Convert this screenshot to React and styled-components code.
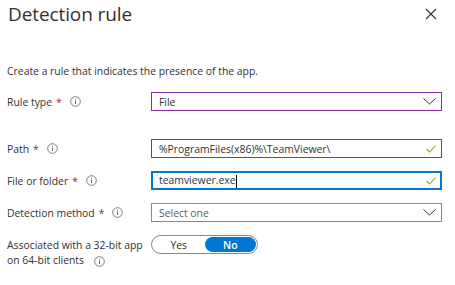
import React from "react";
import styled, { createGlobalStyle } from "styled-components";

const Global = createGlobalStyle`
  html, body { margin: 0; padding: 0; background: #fff; }
  body { font-family: "Open Sans", "Noto Sans", sans-serif; color: #323130; }
`;

const Page = styled.div`
  width: 455px;
  height: 285px;
  overflow: hidden;
  display: flex;
  flex-direction: column;
`;

const Header = styled.div`
  display: flex;
  align-items: center;
  justify-content: space-between;
  height: 28px;
  padding: 0 18px 0 8px;
`;

const Title = styled.h1`
  margin: 0;
  font-size: 19px;
  font-weight: 400;
  letter-spacing: -0.1px;
  color: #323130;
`;

const CloseButton = styled.button`
  border: 0;
  background: none;
  padding: 0;
  width: 12px;
  height: 12px;
  display: flex;
  cursor: pointer;
`;

const Description = styled.p`
  margin: 36px 0 0 7px;
  font-size: 10.4px;
  line-height: 14px;
`;

const Form = styled.div`
  display: grid;
  grid-template-columns: 144px 291px;
  column-gap: 0;
  row-gap: 13px;
  margin: 14px 0 0 7px;
  align-items: center;
`;

const Label = styled.div`
  font-size: 10.4px;
  line-height: ${(p) => (p.$top ? "15px" : "14px")};
  display: flex;
  align-items: center;
  margin-top: ${(p) => (p.$spaced ? "15px" : p.$top ? "3px" : "0")};
  align-self: ${(p) => (p.$top ? "start" : "center")};
`;

const Star = styled.span`
  color: #a4262c;
  margin-left: 4px;
`;

const InfoWrap = styled.span`
  display: inline-flex;
  vertical-align: middle;
  margin-left: ${(p) => (p.$wide ? "10px" : "8px")};
`;

const Field = styled.div`
  box-sizing: border-box;
  height: 19px;
  margin-top: ${(p) => (p.$spaced ? "15px" : "0")};
  border: ${(p) => (p.$focus ? "2px solid #0078d4" : p.$dirty ? "1px solid #8a2da5" : "1px solid #8a8886")};
  display: flex;
  align-items: center;
  padding: 0 ${(p) => (p.$focus ? "4px" : "5px")} 0 ${(p) => (p.$focus ? "6px" : "7px")};
  font-size: 10.4px;
  color: ${(p) => (p.$placeholder ? "#605e5c" : "#323130")};
`;

const FieldText = styled.span`
  flex: 1;
  white-space: nowrap;
`;

const Caret = styled.span`
  display: inline-block;
  width: 1px;
  height: 13px;
  background: #000;
  vertical-align: middle;
`;

const Toggle = styled.div`
  box-sizing: border-box;
  width: 107px;
  height: 19px;
  border: 1px solid #8a8886;
  border-radius: 10px;
  display: flex;
  align-items: center;
  padding: 1px;
  align-self: start;
`;

const ToggleOption = styled.div`
  flex: 1;
  height: 15px;
  border-radius: 8px;
  display: flex;
  align-items: center;
  justify-content: center;
  font-size: 10.4px;
  font-weight: ${(p) => (p.$active ? 600 : 400)};
  background: ${(p) => (p.$active ? "#0078d4" : "transparent")};
  color: ${(p) => (p.$active ? "#fff" : "#323130")};
`;

const InfoIcon = () => (
  <svg width="11" height="11" viewBox="0 0 11 11">
    <circle cx="5.5" cy="5.5" r="4.8" fill="none" stroke="#605e5c" strokeWidth="0.8" />
    <line x1="5.5" y1="4.6" x2="5.5" y2="8" stroke="#605e5c" strokeWidth="0.9" />
    <circle cx="5.5" cy="3.2" r="0.55" fill="#605e5c" />
  </svg>
);

const Chevron = () => (
  <svg width="13" height="7" viewBox="0 0 13 7">
    <polyline points="0.5,0.5 6.5,6 12.5,0.5" fill="none" stroke="#323130" strokeWidth="1" />
  </svg>
);

const Check = () => (
  <svg width="10" height="8" viewBox="0 0 10 8">
    <polyline points="0.5,4 3.5,7 9.5,0.8" fill="none" stroke="#7fba40" strokeWidth="1.1" />
  </svg>
);

const Info = ({ wide }) => (
  <InfoWrap $wide={wide}>
    <InfoIcon />
  </InfoWrap>
);

export default function App() {
  return (
    <Page>
      <Global />
      <Header>
        <Title>Detection rule</Title>
        <CloseButton aria-label="Close">
          <svg width="12" height="12" viewBox="0 0 12 12">
            <line x1="1" y1="1" x2="11" y2="11" stroke="#323130" strokeWidth="1.1" />
            <line x1="11" y1="1" x2="1" y2="11" stroke="#323130" strokeWidth="1.1" />
          </svg>
        </CloseButton>
      </Header>
      <Description>Create a rule that indicates the presence of the app.</Description>
      <Form>
        <Label>
          Rule type<Star>*</Star>
          <Info />
        </Label>
        <Field $dirty>
          <FieldText>File</FieldText>
          <Chevron />
        </Field>

        <Label $spaced>
          Path<Star>*</Star>
          <Info />
        </Label>
        <Field $dirty $spaced>
          <FieldText>%ProgramFiles(x86)%\TeamViewer\</FieldText>
          <Check />
        </Field>

        <Label>
          File or folder<Star>*</Star>
          <Info />
        </Label>
        <Field $focus>
          <FieldText>
            teamviewer.exe<Caret />
          </FieldText>
          <Check />
        </Field>

        <Label>
          Detection method<Star>*</Star>
          <Info />
        </Label>
        <Field $placeholder>
          <FieldText>Select one</FieldText>
          <Chevron />
        </Field>

        <Label $top>
          <span>
            Associated with a 32-bit app
            <br />
            on 64-bit clients
            <Info wide />
          </span>
        </Label>
        <Toggle>
          <ToggleOption>Yes</ToggleOption>
          <ToggleOption $active>No</ToggleOption>
        </Toggle>
      </Form>
    </Page>
  );
}
